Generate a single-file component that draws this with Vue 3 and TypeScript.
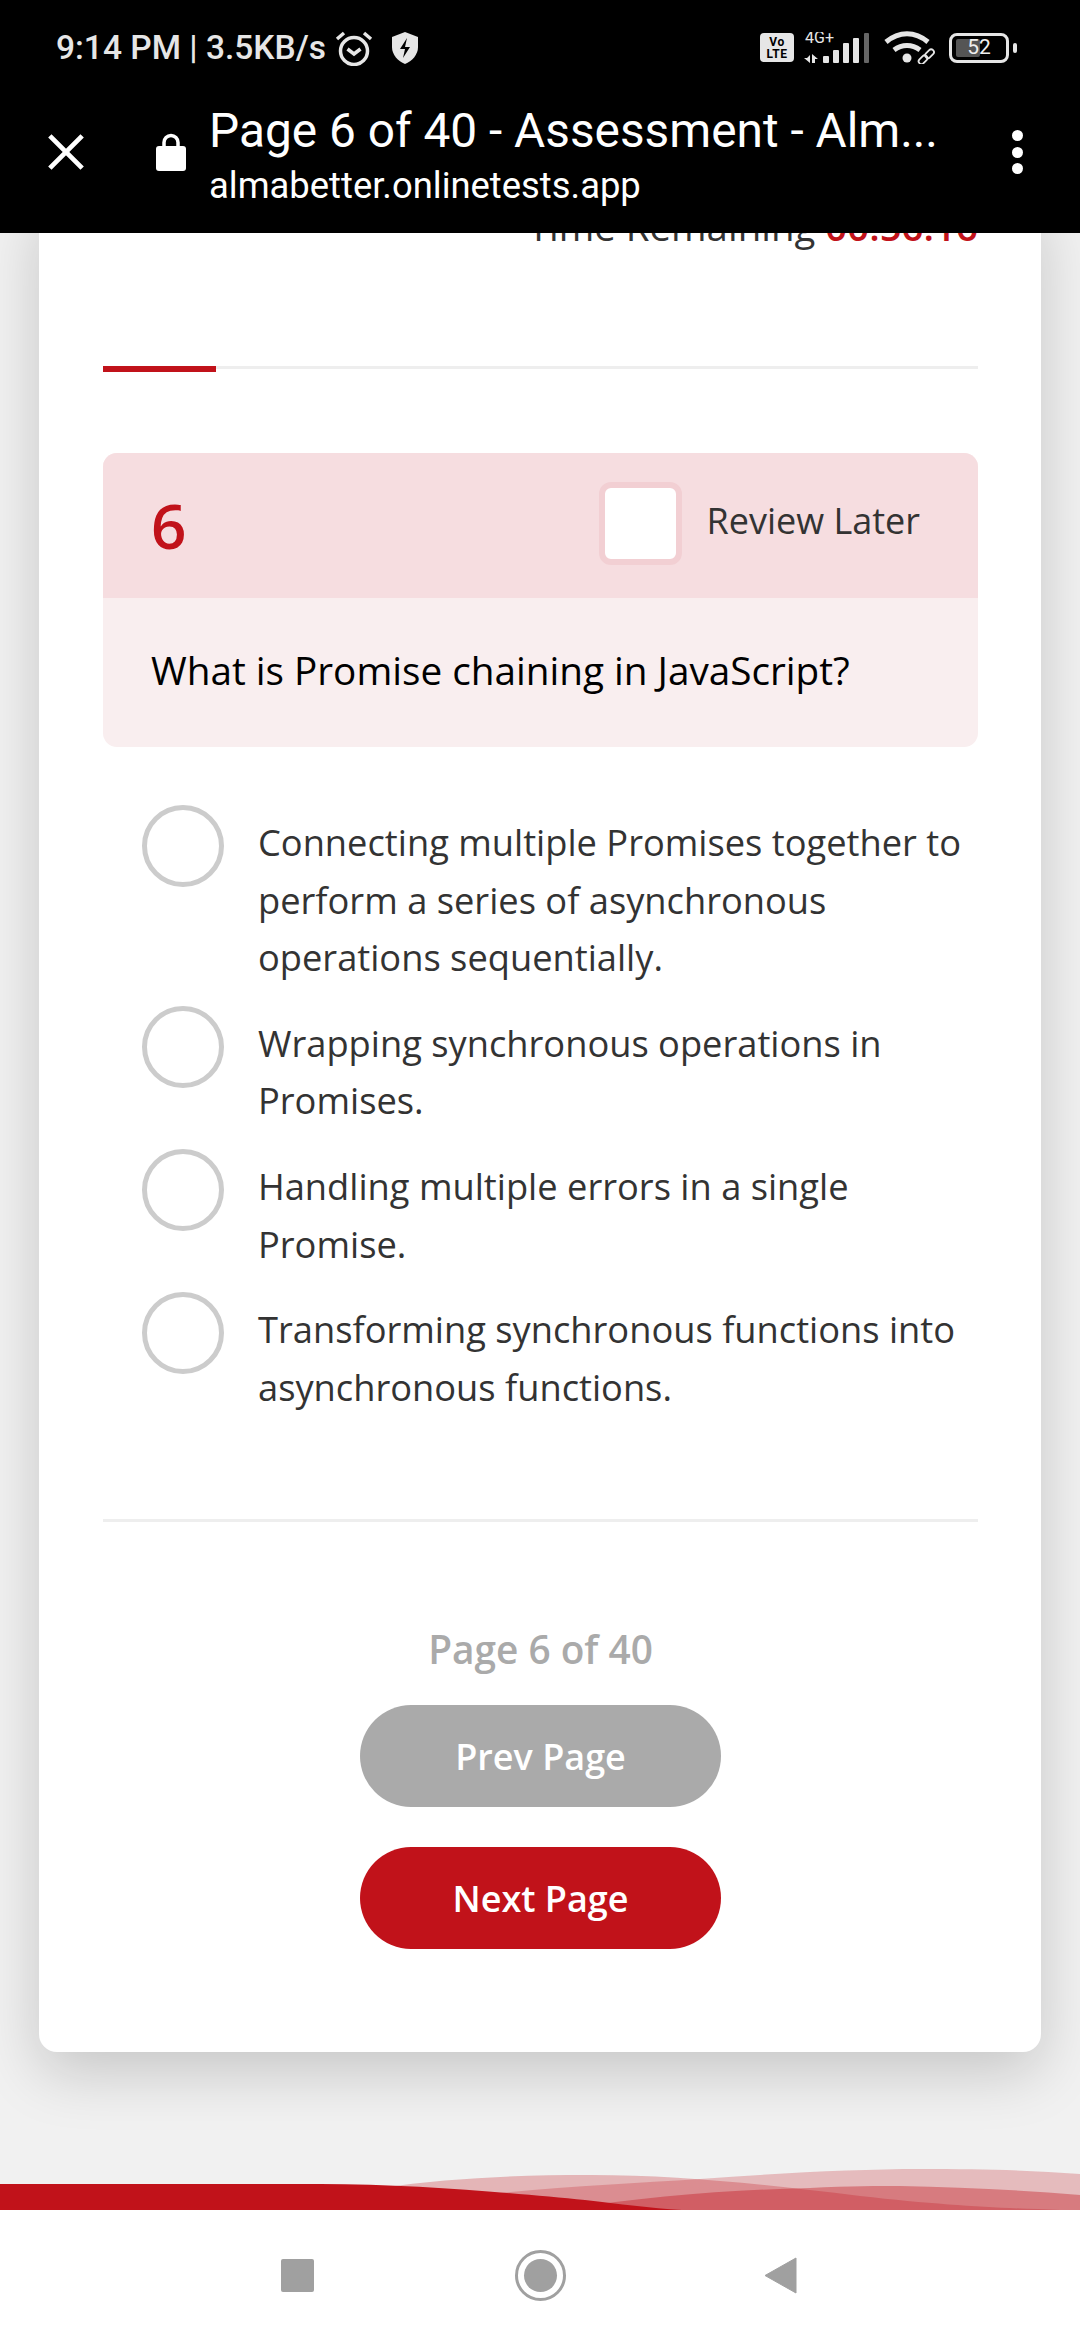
<script setup lang="ts">
interface Option {
  id: number;
  text: string;
}

const options: Option[] = [
  { id: 1, text: 'Connecting multiple Promises together to perform a series of asynchronous operations sequentially.' },
  { id: 2, text: 'Wrapping synchronous operations in Promises.' },
  { id: 3, text: 'Handling multiple errors in a single Promise.' },
  { id: 4, text: 'Transforming synchronous functions into asynchronous functions.' }
];
</script>

<template>
  <div class="screen">
    <header class="top">
      <div class="status">
        <div class="status-left">
          <span class="clock">9:14 PM | 3.5KB/s</span>
          <svg class="alarm" viewBox="0 0 40 36">
            <circle cx="20" cy="21" r="13.5" />
            <path d="M13.5 19l6.500 5 6.500-5M3 9l7-6M37 9l-7-6" />
          </svg>
          <svg class="shield" viewBox="0 0 28 32">
            <path d="M14 0l13 5v10c0 8-6 14-13 17C7 29 1 23 1 15V5z" fill="#e6e6e6" />
            <path d="M16 6l-7 11h5l-2 9 7-11h-5z" fill="#000" />
          </svg>
        </div>
        <div class="status-right">
          <div class="volte"><span>Vo</span><span>LTE</span></div>
          <svg class="signal" viewBox="0 0 67 31">
            <text x="2" y="11" class="net">4G+</text>
            <path d="M7 23v8L1 26h3zM9 22l6 5h-3v4H9z" fill="#e6e6e6" />
            <rect x="20" y="24" width="6" height="7" rx="1" fill="#e6e6e6" />
            <rect x="30" y="18" width="6" height="13" rx="1" fill="#e6e6e6" />
            <rect x="40" y="11" width="6" height="20" rx="1" fill="#e6e6e6" />
            <rect x="50" y="6" width="6" height="25" rx="1" fill="#e6e6e6" />
            <rect x="61" y="1" width="5" height="30" rx="1" fill="#666" />
          </svg>
          <svg class="wifi" viewBox="0 0 51 33">
            <path d="M2 11c13-11 29-11 42 0" />
            <path d="M10 19c8-6 18-6 26 0" />
            <circle cx="23" cy="27" r="4.500" fill="#e6e6e6" stroke="none" />
            <rect x="34" y="26" width="10" height="5.500" rx="2.700" transform="rotate(-45 39 28.700)" class="link" />
            <rect x="40.500" y="20" width="10" height="5.500" rx="2.700" transform="rotate(-45 45.500 22.700)" class="link" />
          </svg>
          <div class="battery">
            <div class="battery-body">
              <div class="battery-fill"></div>
              <span>52</span>
            </div>
            <div class="battery-cap"></div>
          </div>
        </div>
      </div>
      <div class="toolbar">
        <svg class="close" viewBox="0 0 40 40">
          <path d="M3 3l34 34M37 3L3 37" />
        </svg>
        <svg class="lock" viewBox="0 0 30 38">
          <path d="M8 16V9.500a7 7 0 0 1 14 0V16" fill="none" stroke="#fff" stroke-width="3.500" />
          <rect x="0" y="13" width="30" height="25" rx="3" fill="#fff" />
        </svg>
        <div class="title-block">
          <div class="page-title">Page 6 of 40 - Assessment - Alm...</div>
          <div class="page-url">almabetter.onlinetests.app</div>
        </div>
        <div class="kebab"><i></i><i></i><i></i></div>
      </div>
    </header>

    <main class="content">
      <section class="card">
        <div class="timer">Time Remaining <b>00:56:16</b></div>
        <div class="progress"><div class="progress-fill"></div></div>

        <div class="question">
          <div class="question-head">
            <span class="number">6</span>
            <label class="review">
              <span class="checkbox"></span>
              <span class="review-text">Review Later</span>
            </label>
          </div>
          <div class="question-body">What is Promise chaining in JavaScript?</div>
        </div>

        <ul class="options">
          <li v-for="opt in options" :key="opt.id" class="option">
            <span class="radio"></span>
            <span class="option-text">{{ opt.text }}</span>
          </li>
        </ul>

        <div class="divider"></div>

        <div class="pager">
          <div class="pager-label">Page 6 of 40</div>
          <button class="btn prev">Prev Page</button>
          <button class="btn next">Next Page</button>
        </div>
      </section>
    </main>

    <svg class="waves" viewBox="0 0 1080 60" preserveAspectRatio="none">
      <path d="M380 38C450 28 520 25 590 25C680 25 760 34 860 46C950 56 1000 58 1060 60H380Z" fill="#c1121a" opacity="0.27" />
      <path d="M440 50C530 38 620 34 700 29C780 23 860 19 920 19C980 19 1030 20 1080 24V60H440Z" fill="#c1121a" opacity="0.24" />
      <path d="M560 60C650 46 730 40 810 38C850 36 880 36 900 36C960 37 1020 40 1080 45V60Z" fill="#c1121a" opacity="0.38" />
      <path d="M0 34H320C420 34 520 44 585 50C620 54 650 58 682 60H0Z" fill="#c1121a" />
    </svg>

    <nav class="navbar">
      <span class="nav-square"></span>
      <span class="nav-home"><i></i></span>
      <svg class="nav-back" viewBox="0 0 33 37">
        <path d="M32 1v35L1 18.500z" fill="#a0a0a0" stroke="#a0a0a0" stroke-linejoin="round" stroke-width="1" />
      </svg>
    </nav>
  </div>
</template>

<style>
html,
body {
  margin: 0;
  background: #f1f1f1;
}
</style>

<style scoped>
.screen {
  width: 1080px;
  height: 2340px;
  display: flex;
  flex-direction: column;
  overflow: hidden;
  background: #f1f1f1;
  font-family: "Open Sans", sans-serif;
}

/* browser chrome */
.top {
  height: 233px;
  flex: none;
  background: #000;
  position: relative;
  z-index: 2;
  font-family: Roboto, sans-serif;
}

.status {
  height: 95px;
  padding: 0 63px 0 56px;
  display: flex;
  justify-content: space-between;
  align-items: center;
  color: #e6e6e6;
}

.status-left {
  display: flex;
  align-items: center;
}

.clock {
  font-size: 33.5px;
  font-weight: 500;
}

.alarm {
  width: 40px;
  height: 36px;
  margin-left: 8px;
  fill: none;
  stroke: #e6e6e6;
  stroke-width: 3.5;
}

.shield {
  width: 28px;
  height: 32px;
  margin-left: 17px;
}

.status-right {
  display: flex;
  align-items: center;
}

.volte {
  width: 34px;
  height: 29px;
  background: #e6e6e6;
  border-radius: 4px;
  display: flex;
  flex-direction: column;
  align-items: center;
  justify-content: center;
  color: #000;
  font-size: 12px;
  font-weight: 700;
  line-height: 12px;
  letter-spacing: 0.5px;
}

.signal {
  width: 67px;
  height: 31px;
  margin-left: 9px;
}

.net {
  font-size: 16px;
  fill: #e6e6e6;
}

.wifi {
  width: 51px;
  height: 33px;
  margin-left: 14px;
  fill: none;
  stroke: #e6e6e6;
  stroke-width: 5;
}

.wifi .link {
  stroke-width: 1.8;
}

.battery {
  display: flex;
  align-items: center;
  margin-left: 14px;
}

.battery-body {
  width: 60px;
  height: 30px;
  box-sizing: border-box;
  border: 3.5px solid #e6e6e6;
  border-radius: 8px;
  position: relative;
  display: flex;
  align-items: center;
  justify-content: center;
}

.battery-fill {
  position: absolute;
  left: 4px;
  top: 3px;
  bottom: 3px;
  width: 24px;
  background: #555;
  border-radius: 2px;
}

.battery-body span {
  position: relative;
  font-size: 21px;
  color: #eee;
  line-height: 21px;
}

.battery-cap {
  width: 4px;
  height: 10px;
  margin-left: 4px;
  background: #e6e6e6;
  border-radius: 2px;
}

.toolbar {
  height: 114px;
  padding: 0 0 0 47px;
  display: flex;
  align-items: center;
}

.close {
  width: 38px;
  height: 38px;
  fill: none;
  stroke: #fff;
  stroke-width: 5;
  flex: none;
}

.lock {
  width: 30px;
  height: 38px;
  margin-left: 71px;
  flex: none;
}

.title-block {
  width: 760px;
  margin: 3px 0 0 23px;
  color: #fff;
  white-space: nowrap;
}

.page-title {
  font-size: 47.8px;
  line-height: 64px;
}

.page-url {
  font-size: 36.4px;
  line-height: 46px;
}

.kebab {
  margin-left: 43px;
  display: flex;
  flex-direction: column;
  gap: 5.5px;
}

.kebab i {
  width: 11px;
  height: 11px;
  background: #fff;
  border-radius: 50%;
}

/* page body */
.content {
  flex: 1;
  min-height: 0;
  overflow: hidden;
  padding: 0 39px;
}

.card {
  height: 1852px;
  margin-top: -33px;
  padding: 0 63px 0 64px;
  background: #fff;
  border-radius: 0 0 18px 18px;
  box-shadow: 0 20px 60px rgba(0, 0, 0, 0.18);
  display: flex;
  flex-direction: column;
}

.timer {
  height: 52px;
  flex: none;
  line-height: 52px;
  text-align: right;
  font-size: 38.4px;
  color: #333;
}

.timer b {
  color: #c1121a;
  font-weight: 600;
}

.progress {
  height: 3px;
  margin-top: 114px;
  background: #eee;
  flex: none;
}

.progress-fill {
  width: 113px;
  height: 6px;
  background: #c1121a;
}

.question {
  margin-top: 84px;
  height: 294px;
  border-radius: 14px;
  overflow: hidden;
  background: #f9eeef;
  flex: none;
  display: flex;
  flex-direction: column;
}

.question-head {
  height: 145px;
  flex: none;
  padding: 0 58px 0 48px;
  background: #f6dde0;
  display: flex;
  justify-content: space-between;
  align-items: center;
}

.number {
  font-size: 62px;
  color: #c1121a;
  font-weight: 600;
  margin-bottom: 2px;
}

.review {
  display: flex;
  align-items: center;
  gap: 24px;
  margin-bottom: 4px;
  font-size: 36px;
  color: #333;
}

.review-text {
  margin-bottom: 6px;
}

.checkbox {
  width: 71px;
  height: 71px;
  border: 6px solid #f2cfd3;
  border-radius: 12px;
  background: #fff;
}

.question-body {
  flex: 1;
  display: flex;
  align-items: center;
  padding: 0 48px 6px;
  font-size: 38.7px;
  color: #000;
}

.options {
  list-style: none;
  margin: 58px 0 0;
  padding: 0;
}

.option {
  display: flex;
  margin-bottom: 28px;
  padding-left: 39px;
}

.radio {
  flex: none;
  width: 72px;
  height: 72px;
  border: 5px solid #ccc;
  border-radius: 50%;
}

.option-text {
  margin: 9px 0 -9px 34px;
  font-size: 36.25px;
  line-height: 57.6px;
  color: #333;
}

.divider {
  height: 3px;
  flex: none;
  margin-top: 84px;
  background: #eee;
}

.pager {
  display: flex;
  flex-direction: column;
  align-items: center;
}

.pager-label {
  margin-top: 101px;
  font-size: 38.8px;
  line-height: 52px;
  font-weight: 600;
  color: #aaa;
}

.btn {
  width: 361px;
  height: 102px;
  border: 0;
  border-radius: 51px;
  color: #fff;
  font-family: inherit;
  font-size: 36px;
  font-weight: 600;
}

.prev {
  margin-top: 30px;
  background: #aaa;
}

.next {
  margin-top: 40px;
  background: #c1121a;
}

.waves {
  width: 1080px;
  height: 60px;
  flex: none;
  display: block;
}

.navbar {
  height: 130px;
  flex: none;
  background: #fff;
  display: grid;
  grid-template-columns: 245px 240px 240px;
  padding-left: 175px;
  align-items: center;
  justify-items: center;
}

.nav-square {
  width: 33px;
  height: 33px;
  background: #a0a0a0;
  border-radius: 2px;
}

.nav-home {
  width: 45px;
  height: 45px;
  border: 3px solid #a0a0a0;
  border-radius: 50%;
  display: flex;
  align-items: center;
  justify-content: center;
}

.nav-home i {
  width: 33px;
  height: 33px;
  background: #a0a0a0;
  border-radius: 50%;
}

.nav-back {
  width: 33px;
  height: 37px;
}
</style>
